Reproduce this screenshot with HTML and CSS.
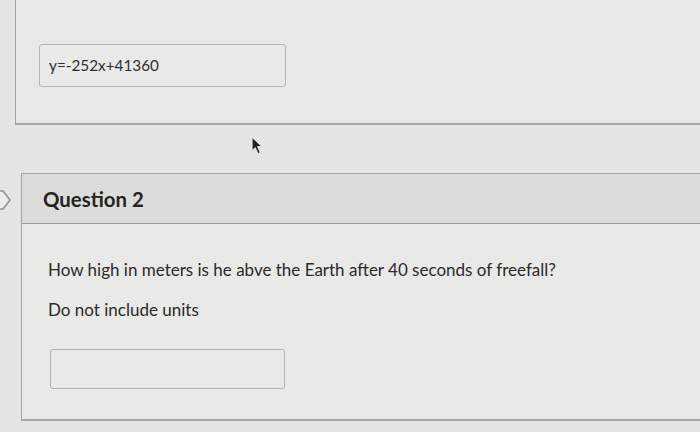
FILE: index.html
```html
<!DOCTYPE html>
<html>
<head>
<meta charset="utf-8">
<link rel="stylesheet" href="styles.css">
</head>
<body>
<div class="page">
  <section class="prev-card">
    <div class="answer-box">y=-252x+41360</div>
  </section>
  <div class="cursor-row">
    <svg class="cursor" width="13" height="19" viewBox="0 0 12 17"><path d="M1 1 L1 13 L4 10.5 L6.5 16 L8.5 15 L6 9.5 L10 9.5 Z" fill="#222" stroke="#f0f0f0" stroke-width="0.8"/></svg>
  </div>
  <div class="q-row">
    <svg class="flag" width="12" height="22" viewBox="0 0 12 22"><path d="M-10 2 L3 2 L10 11 L3 20 L-10 20" fill="#ecedec" stroke="#8e959b" stroke-width="1.6"/></svg>
    <section class="q-card">
      <header class="q-header">Question 2</header>
      <div class="q-body">
        <p class="q-text">How high in meters is he abve the Earth after 40 seconds of freefall?</p>
        <p class="q-note">Do not include units</p>
        <div class="answer-input"></div>
      </div>
    </section>
  </div>
</div>
</body>
</html>
```

FILE: styles.css
```css
html, body {
  margin: 0;
  padding: 0;
}
body {
  width: 700px;
  height: 432px;
  overflow: hidden;
  background: #e5e5e3;
  font-family: Lato, "Open Sans", "Liberation Sans", sans-serif;
  color: #2d2d2d;
}
.page {
  display: flex;
  flex-direction: column;
}
.prev-card {
  margin-left: 15px;
  border-left: 1px solid #a3a3a1;
  border-bottom: 2px solid #a8a8a6;
  background: #e8e8e6;
  padding-top: 44px;
  box-sizing: border-box;
  height: 125px;
}
.answer-box {
  margin-left: 23px;
  width: 247px;
  height: 43px;
  box-sizing: border-box;
  border: 1px solid #b4b4b2;
  border-radius: 3px;
  background: #e9e9e7;
  font-size: 15.3px;
  line-height: 41px;
  padding-left: 9px;
  color: #2f2f2f;
}
.cursor-row {
  height: 48px;
  position: relative;
}
.cursor {
  position: absolute;
  left: 251px;
  top: 11px;
}
.q-row {
  display: flex;
  align-items: flex-start;
}
.flag {
  margin-top: 16px;
  margin-right: 9px;
  flex: none;
}
.q-card {
  flex: 1;
  border-left: 1px solid #a0a09e;
  border-top: 1px solid #a4a4a2;
  border-bottom: 2px solid #a8a8a6;
  background: #e9e9e7;
  height: 248px;
  box-sizing: border-box;
  margin-right: -20px;
}
.q-header {
  height: 50px;
  box-sizing: border-box;
  background: #dcdcda;
  border-bottom: 1px solid #9e9e9c;
  font-weight: 700;
  font-size: 20.4px;
  line-height: 50px;
  padding-left: 21px;
  color: #232323;
}
.q-body {
  padding-left: 26px;
  padding-top: 34px;
}
.q-text {
  margin: 0;
  font-size: 17px;
  line-height: 23px;
  color: #2a2a2a;
}
.q-note {
  margin: 17px 0 0 0;
  font-size: 17px;
  line-height: 23px;
  color: #2a2a2a;
}
.answer-input {
  margin-top: 28px;
  margin-left: 2px;
  width: 235px;
  height: 40px;
  box-sizing: border-box;
  border: 1px solid #b2b2b0;
  border-radius: 3px;
  background: #e8e8e6;
}
```
